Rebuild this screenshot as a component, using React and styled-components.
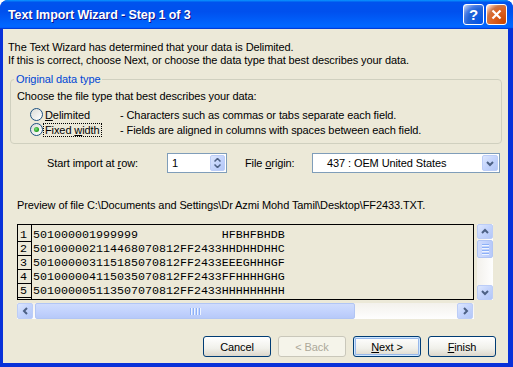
import React from "react";
import styled, { createGlobalStyle } from "styled-components";

const GlobalStyle = createGlobalStyle`
  html, body {
    margin: 0;
    padding: 0;
    background: #fff;
  }
  body {
    font-family: "Liberation Sans", Arial, sans-serif;
    font-size: 11px;
    letter-spacing: -0.1px;
    color: #000;
  }
`;

const Window = styled.div`
  width: 513px;
  height: 367px;
  display: flex;
  flex-direction: column;
  background: #0831d9;
  border-radius: 8px 8px 0 0;
  overflow: hidden;
`;

const TitleBar = styled.div`
  height: 29px;
  flex: none;
  display: flex;
  align-items: center;
  padding: 0 6px 0 8px;
  background: linear-gradient(
    180deg,
    #0997ff,
    #0053ee 8%,
    #0050ee 40%,
    #06f 88%,
    #06f 93%,
    #005bff 95%,
    #003dd7 96%,
    #003dd7
  );
`;

const Title = styled.div`
  flex: 1;
  color: #fff;
  font-weight: bold;
  font-size: 12.5px;
  letter-spacing: -0.1px;
  text-shadow: 1px 1px #0f1089;
`;

const Controls = styled.div`
  display: flex;
  gap: 2px;
`;

const ControlButton = styled.div`
  width: 21px;
  height: 21px;
  box-sizing: border-box;
  border: 1px solid #fff;
  border-radius: 3px;
  display: flex;
  align-items: center;
  justify-content: center;
  color: #fff;
  font-weight: bold;
  font-size: 15px;
  background: ${(p) =>
    p.$close
      ? "radial-gradient(circle at 90% 90%, #cc4600 0%, #dc6527 55%, #cd7546 70%, #ffccb2 90%, #fff 100%)"
      : "radial-gradient(circle at 90% 90%, #0054e9 0%, #2263d5 55%, #4479e4 70%, #a3bbec 90%, #fff 100%)"};
`;

const Frame = styled.div`
  flex: 1;
  display: flex;
  min-height: 0;
  padding: 0 5px 4px 3px;
`;

const Body = styled.div`
  flex: 1;
  display: flex;
  flex-direction: column;
  background: #ece9d8;
  padding: 12px 6px 0 5px;
`;

const Intro = styled.div`
  line-height: 12.5px;
`;

const GroupBox = styled.fieldset`
  margin: 7px 0 0 2px;
  padding: 4px 0 6px 6px;
  border: 1px solid #d0d0bf;
  border-radius: 4px;
  min-width: 0;
`;

const Legend = styled.legend`
  color: #0046d5;
  padding: 0 2px;
  margin-left: -3px;
  line-height: 13px;
`;

const Line = styled.div`
  line-height: 13px;
`;

const RadioRow = styled.div`
  display: grid;
  grid-template-columns: 13px 77px auto;
  align-items: center;
  height: 15px;
  margin-left: 13px;
  margin-top: ${(p) => (p.$first ? "4px" : "0")};
`;

const Radio = styled.span`
  width: 13px;
  height: 13px;
  box-sizing: border-box;
  border-radius: 50%;
  border: 1px solid #1c5180;
  background: linear-gradient(135deg, #dcdcd7, #fff);
  display: flex;
  align-items: center;
  justify-content: center;

  &::after {
    content: "";
    display: ${(p) => (p.$checked ? "block" : "none")};
    width: 5px;
    height: 5px;
    border-radius: 50%;
    background: radial-gradient(circle at 40% 40%, #7fe07f, #21a121 60%, #1a8a1a);
  }
`;

const RadioLabel = styled.span`
  justify-self: start;
  padding: 0 1px;
  line-height: 12px;
  border: 1px dotted ${(p) => (p.$focused ? "#000" : "transparent")};
`;

const Key = styled.span`
  text-decoration: underline;
`;

const ImportRow = styled.div`
  display: flex;
  align-items: center;
  height: 20px;
  margin: 9px 0 0 39px;
`;

const FieldLabel = styled.span`
  width: ${(p) => p.$width}px;
  margin-left: ${(p) => p.$offset || 0}px;
  flex: none;
`;

const TextBox = styled.div`
  width: ${(p) => p.$width}px;
  height: 20px;
  box-sizing: border-box;
  border: 1px solid #7f9db9;
  background: #fff;
  display: flex;
  align-items: center;
  padding-left: ${(p) => p.$pad}px;
  flex: none;
`;

const BoxText = styled.span`
  flex: 1;
`;

const XpButton = styled.div`
  width: ${(p) => p.$w || 16}px;
  height: ${(p) => p.$h || 16}px;
  box-sizing: border-box;
  margin: ${(p) => p.$margin || "0"};
  border: 1px solid #bccdf7;
  border-radius: 2px;
  background: linear-gradient(135deg, #dde7fe, #c4d4fc 50%, #b3c7f7);
  display: flex;
  flex-direction: column;
  align-items: center;
  justify-content: center;
  gap: 2px;
  flex: none;
`;

const PreviewLabel = styled.div`
  line-height: 13px;
  margin: 26px 0 0 9px;
`;

const PreviewArea = styled.div`
  display: grid;
  grid-template-columns: 457px 16px;
  grid-template-rows: 76px 16px;
  column-gap: 3px;
  row-gap: 3px;
  margin: 12px 0 0 9px;
`;

const DataBox = styled.div`
  border: 1px solid #000;
  box-sizing: border-box;
  display: flex;
  overflow: hidden;
  font-family: "Liberation Mono", "Courier New", monospace;
  font-size: 11.67px;
  letter-spacing: 0;
`;

const NumColumn = styled.div`
  width: 14px;
  box-sizing: border-box;
  border-right: 1px solid #000;
  padding-top: 3px;
  flex: none;
`;

const NumCell = styled.div`
  height: 14px;
  box-sizing: border-box;
  border-bottom: 1px solid #000;
  line-height: 14px;
  padding-left: 2px;
`;

const TextColumn = styled.div`
  padding: 3px 0 0 1px;
`;

const TextLine = styled.div`
  height: 14px;
  line-height: 14px;
  white-space: pre;
`;

const VScroll = styled.div`
  display: flex;
  flex-direction: column;
  background: linear-gradient(90deg, #f3f1ec, #fefefe);
`;

const HScroll = styled.div`
  display: flex;
  align-items: center;
  background: linear-gradient(180deg, #f3f1ec, #fefefe);
`;

const Thumb = styled.div`
  box-sizing: border-box;
  border: 1px solid #b1c5f4;
  border-radius: 2px;
  background: ${(p) =>
    p.$horizontal
      ? "linear-gradient(180deg, #d0dcfc, #c3d3fd 50%, #b7c9f9)"
      : "linear-gradient(90deg, #d0dcfc, #c3d3fd 50%, #b7c9f9)"};
  width: ${(p) => (p.$horizontal ? "320px" : "16px")};
  height: ${(p) => (p.$horizontal ? "16px" : "18px")};
  margin: ${(p) => (p.$horizontal ? "0 0 0 2px" : "1px 0 0 0")};
  display: flex;
  flex-direction: ${(p) => (p.$horizontal ? "row" : "column")};
  align-items: center;
  justify-content: center;
  gap: 1px;
`;

const Grip = styled.span`
  display: block;
  width: ${(p) => (p.$horizontal ? "1px" : "7px")};
  height: ${(p) => (p.$horizontal ? "7px" : "1px")};
  background: #8cb0f8;
  box-shadow: ${(p) => (p.$horizontal ? "1px 0 #eef4fe" : "0 1px #eef4fe")};
  margin: ${(p) => (p.$horizontal ? "0 1px 0 0" : "0 0 1px 0")};
`;

const Spacer = styled.div`
  flex: 1;
`;

const ButtonRow = styled.div`
  display: flex;
  justify-content: flex-end;
  gap: 7px;
  margin: 17px 6px 0 0;
`;

const PushButton = styled.div`
  width: 68px;
  height: 21px;
  box-sizing: border-box;
  border: 1px solid ${(p) => (p.$disabled ? "#c9c7ba" : "#003c74")};
  border-radius: 3px;
  background: ${(p) =>
    p.$disabled ? "#f5f4ea" : "linear-gradient(180deg, #fff, #f0f0ea 60%, #dcd7cb)"};
  color: ${(p) => (p.$disabled ? "#aca899" : "#000")};
  box-shadow: ${(p) =>
    p.$default ? "inset 0 0 0 1px #cee7ff, inset 0 0 0 2px #98b8ea" : "none"};
  display: flex;
  align-items: center;
  justify-content: center;
`;

const Chevron = ({ dir }) => {
  const paths = {
    up: "M1 5 L4 2 L7 5",
    down: "M1 2 L4 5 L7 2",
    left: "M5 1 L2 4 L5 7",
    right: "M2 1 L5 4 L2 7",
  };
  const horizontal = dir === "left" || dir === "right";
  return (
    <svg
      width={horizontal ? 7 : 8}
      height={horizontal ? 8 : 7}
      viewBox={horizontal ? "0 0 7 8" : "0 0 8 7"}
    >
      <path d={paths[dir]} fill="none" stroke="#4d6185" strokeWidth="2" />
    </svg>
  );
};

const SmallChevron = ({ dir }) => (
  <svg width="7" height="4" viewBox="0 0 7 4">
    <path
      d={dir === "up" ? "M0.5 3.5 L3.5 0.5 L6.5 3.5" : "M0.5 0.5 L3.5 3.5 L6.5 0.5"}
      fill="none"
      stroke="#4d6185"
      strokeWidth="1.5"
    />
  </svg>
);

const rows = [
  "501000001999999            HFBHFBHDB",
  "501000002114468070812FF2433HHDHHDHHC",
  "501000003115185070812FF2433EEEGHHHGF",
  "501000004115035070812FF2433FFHHHHGHG",
  "501000005113507070812FF2433HHHHHHHHH",
];

export default function App() {
  return (
    <>
      <GlobalStyle />
      <Window>
        <TitleBar>
          <Title>Text Import Wizard - Step 1 of 3</Title>
          <Controls>
            <ControlButton>?</ControlButton>
            <ControlButton $close>
              <svg width="11" height="11" viewBox="0 0 11 11">
                <path d="M1.5 1.5 L9.5 9.5 M9.5 1.5 L1.5 9.5" stroke="#fff" strokeWidth="2.2" />
              </svg>
            </ControlButton>
          </Controls>
        </TitleBar>
        <Frame>
          <Body>
            <Intro>
              The Text Wizard has determined that your data is Delimited.
              <br />
              If this is correct, choose Next, or choose the data type that best describes your data.
            </Intro>
            <GroupBox>
              <Legend>Original data type</Legend>
              <Line>Choose the file type that best describes your data:</Line>
              <RadioRow $first>
                <Radio />
                <RadioLabel>
                  <Key>D</Key>elimited
                </RadioLabel>
                <span>- Characters such as commas or tabs separate each field.</span>
              </RadioRow>
              <RadioRow>
                <Radio $checked />
                <RadioLabel $focused>
                  Fixed <Key>w</Key>idth
                </RadioLabel>
                <span>- Fields are aligned in columns with spaces between each field.</span>
              </RadioRow>
            </GroupBox>
            <ImportRow>
              <FieldLabel $width={120}>
                Start import at <Key>r</Key>ow:
              </FieldLabel>
              <TextBox $width={60} $pad={4}>
                <BoxText>1</BoxText>
                <XpButton $w={15} $h={16} $margin="0 1px 0 0">
                  <SmallChevron dir="up" />
                  <SmallChevron dir="down" />
                </XpButton>
              </TextBox>
              <FieldLabel $width={67} $offset={18}>
                File <Key>o</Key>rigin:
              </FieldLabel>
              <TextBox $width={188} $pad={14}>
                <BoxText>437 : OEM United States</BoxText>
                <XpButton $w={16} $h={16} $margin="0 1px 0 0">
                  <Chevron dir="down" />
                </XpButton>
              </TextBox>
            </ImportRow>
            <PreviewLabel>
              Preview of file C:\Documents and Settings\Dr Azmi Mohd Tamil\Desktop\FF2433.TXT.
            </PreviewLabel>
            <PreviewArea>
              <DataBox>
                <NumColumn>
                  {rows.map((_, i) => (
                    <NumCell key={i}>{i + 1}</NumCell>
                  ))}
                  <NumCell />
                </NumColumn>
                <TextColumn>
                  {rows.map((r, i) => (
                    <TextLine key={i}>{r}</TextLine>
                  ))}
                </TextColumn>
              </DataBox>
              <VScroll>
                <XpButton $w={16} $h={15}>
                  <Chevron dir="up" />
                </XpButton>
                <Thumb>
                  <Grip />
                  <Grip />
                  <Grip />
                  <Grip />
                </Thumb>
                <Spacer />
                <XpButton $w={16} $h={15}>
                  <Chevron dir="down" />
                </XpButton>
              </VScroll>
              <HScroll>
                <XpButton $w={16} $h={16}>
                  <Chevron dir="left" />
                </XpButton>
                <Thumb $horizontal>
                  <Grip $horizontal />
                  <Grip $horizontal />
                  <Grip $horizontal />
                  <Grip $horizontal />
                </Thumb>
                <Spacer />
                <XpButton $w={16} $h={16} $margin="0 1px 0 0">
                  <Chevron dir="right" />
                </XpButton>
              </HScroll>
            </PreviewArea>
            <ButtonRow>
              <PushButton>Cancel</PushButton>
              <PushButton $disabled>&lt; Back</PushButton>
              <PushButton $default>
                <span>
                  <Key>N</Key>ext &gt;
                </span>
              </PushButton>
              <PushButton>
                <span>
                  <Key>F</Key>inish
                </span>
              </PushButton>
            </ButtonRow>
          </Body>
        </Frame>
      </Window>
    </>
  );
}
